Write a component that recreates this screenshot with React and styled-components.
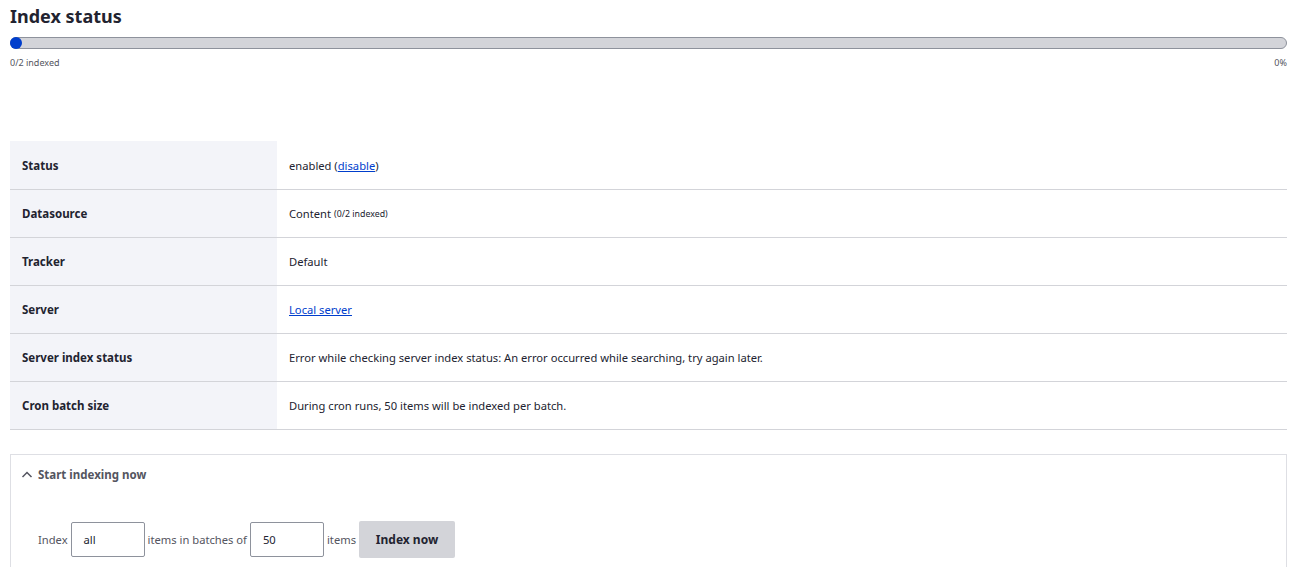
import React from 'react'
import styled, { createGlobalStyle } from 'styled-components'

const font = `"Noto Sans", "Open Sans", Arial, sans-serif`

const Global = createGlobalStyle`
body {
  margin: 0;
  background: #fff;
  font-family: ${font};
  color: #222330;
}
`

const Page = styled.div`
padding: 0 14px 0 10px;
`

const Title = styled.h2`
margin: 0;
padding-top: 3px;
font-size: 18px;
line-height: 26px;
font-weight: 700;
`

const Bar = styled.div`
position: relative;
margin-top: 8px;
height: 10px;
border: 1px solid #8e929c;
border-radius: 6px;
background: #d3d4d9;
`

const Dot = styled.span`
position: absolute;
left: -1px;
top: -1px;
width: 12px;
height: 12px;
border-radius: 50%;
background: #003ecc;
`

const BarLabels = styled.div`
display: flex;
justify-content: space-between;
margin-top: 8px;
font-size: 9px;
line-height: 12px;
color: #545560;
`

const Table = styled.div`
margin-top: 72px;
display: grid;
grid-template-columns: 267px 1fr;
`

const Label = styled.div`
background: #f3f4f9;
height: 48px;
box-sizing: border-box;
border-top: ${(p) => (p.first ? 'none' : '1px solid #d3d4d9')};
padding: 0 12px;
display: flex;
align-items: center;
font-size: 11.5px;
font-weight: 700;
`

const Value = styled.div`
height: 48px;
box-sizing: border-box;
border-top: ${(p) => (p.first ? 'none' : '1px solid #d3d4d9')};
padding: 0 12px;
display: flex;
align-items: center;
font-size: 11.2px;
`

const TableEnd = styled.div`
grid-column: 1 / -1;
border-top: 1px solid #d3d4d9;
`

const Link = styled.a`
color: #003ecc;
text-decoration: underline;
`

const Small = styled.small`
font-size: 8.8px;
margin-left: 3px;
`

const Details = styled.div`
margin-top: 24px;
border: 1px solid #dedfe4;
border-bottom: none;
height: 113px;
`

const Summary = styled.div`
display: flex;
align-items: center;
gap: 5px;
padding: 12px 10px 10px;
font-size: 11.5px;
font-weight: 700;
color: #545560;
`

const Form = styled.div`
display: flex;
align-items: center;
gap: 3px;
margin: 28px 0 0 27px;
font-size: 11.2px;
color: #545560;
`

const Input = styled.div`
width: 74px;
height: 35px;
box-sizing: border-box;
border: 1px solid #8e929c;
border-radius: 2px;
padding: 0 12px;
display: flex;
align-items: center;
color: #222330;
font-size: 11.2px;
`

const Button = styled.div`
height: 37px;
width: 96px;
margin-top: 1px;
display: flex;
align-items: center;
justify-content: center;
background: #d3d4d9;
border-radius: 2px;
font-weight: 700;
font-size: 12px;
color: #222330;
`

const rows = [
  ['Status', <>enabled (<Link>disable</Link>)</>],
  ['Datasource', <>Content<Small>(0/2 indexed)</Small></>],
  ['Tracker', 'Default'],
  ['Server', <Link>Local server</Link>],
  ['Server index status', 'Error while checking server index status: An error occurred while searching, try again later.'],
  ['Cron batch size', 'During cron runs, 50 items will be indexed per batch.'],
]

export default function App() {
  return (
    <Page>
      <Global />
      <Title>Index status</Title>
      <Bar><Dot /></Bar>
      <BarLabels>
        <span>0/2 indexed</span>
        <span>0%</span>
      </BarLabels>
      <Table>
        {rows.map(([k, v], i) => (
          <React.Fragment key={k}>
            <Label first={i === 0}>{k}</Label>
            <Value first={i === 0}>{v}</Value>
          </React.Fragment>
        ))}
        <TableEnd />
      </Table>
      <Details>
        <Summary>
          <svg width="12" height="12" viewBox="0 0 12 12">
            <path d="M1.5 8 L6 3.5 L10.5 8" fill="none" stroke="#545560" strokeWidth="1.5" />
          </svg>
          Start indexing now
        </Summary>
        <Form>
          <span>Index</span>
          <Input>all</Input>
          <span>items in batches of</span>
          <Input>50</Input>
          <span>items</span>
          <Button>Index now</Button>
        </Form>
      </Details>
    </Page>
  )
}
